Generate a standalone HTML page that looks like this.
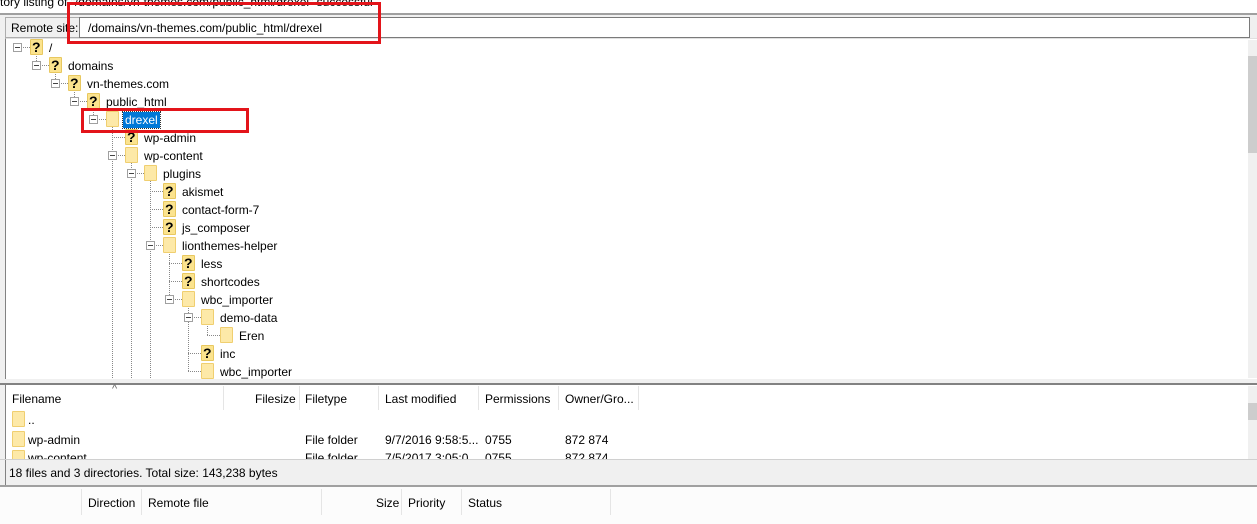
<!DOCTYPE html>
<html><head><meta charset="utf-8"><style>
*{margin:0;padding:0;box-sizing:border-box}
body{width:1257px;height:524px;overflow:hidden;background:#f0f0f0;font-family:"Liberation Sans",sans-serif;font-size:12px;color:#000;position:relative}
.a{position:absolute;white-space:nowrap}
.q{position:absolute;width:13px;height:16px;background:#fbe38e;border:1px solid #e8c860;border-radius:1px}
.q b{position:absolute;left:1px;top:-1px;font-size:14px;font-weight:bold;color:#000;font-family:"Liberation Sans",sans-serif}
.f{position:absolute;width:13px;height:16px;background:#fde9a8;border:1px solid #f0cf70;border-radius:1px}
.ex{position:absolute;width:9px;height:9px;border:1px solid #a0a0a0;background:#fff}
.ex:after{content:"";position:absolute;left:1px;top:3px;width:5px;height:1px;background:#444}
.vl{position:absolute;width:1px;border-left:1px dotted #888}
.hl{position:absolute;height:1px;border-top:1px dotted #888}
.red{position:absolute;border:3px solid #e3141a}
</style></head><body>
<div class="a" style="left:0;top:-5px;width:1257px;height:18px;background:#fff;font-size:12px">tory listing of "/domains/vn-themes.com/public_html/drexel" successful</div>
<div class="a" style="left:0;top:13px;width:1257px;height:2px;background:#a0a0a0"></div>
<div class="a" style="left:5px;top:17px;width:75px;height:21px;border:1px solid #adadad;padding:3px 0 0 5px">Remote site:</div>
<div class="a" style="left:79px;top:17px;width:1171px;height:21px;background:#fff;border:1px solid #7a7a7a;padding:3px 0 0 8px">/domains/vn-themes.com/public_html/drexel</div>
<div class="a" style="left:5px;top:38px;width:1252px;height:341px;background:#fff;border-left:1px solid #828282;border-top:1px solid #e0e0e0"></div>
<div class="a" style="left:1248px;top:40px;width:9px;height:338px;background:#f0f0f0"></div>
<div class="a" style="left:1248px;top:56px;width:9px;height:97px;background:#cdcdcd"></div>
<div class="a" style="left:0;top:383px;width:1257px;height:2px;background:#828282"></div>
<div class="a" style="left:5px;top:385px;width:1252px;height:75px;background:#fff;border-left:1px solid #828282"></div>
<div class="a" style="left:1248px;top:386px;width:9px;height:74px;background:#f0f0f0"></div>
<div class="a" style="left:1248px;top:403px;width:9px;height:17px;background:#cdcdcd"></div>
<div class="a" style="left:112px;top:383px;font-size:11px;color:#666">^</div>
<div class="a" style="left:12px;top:392px">Filename</div>
<div class="a" style="left:223px;top:386px;width:1px;height:24px;background:#e5e5e5"></div>
<div class="a" style="left:255px;top:392px">Filesize</div>
<div class="a" style="left:299px;top:386px;width:1px;height:24px;background:#e5e5e5"></div>
<div class="a" style="left:305px;top:392px">Filetype</div>
<div class="a" style="left:378px;top:386px;width:1px;height:24px;background:#e5e5e5"></div>
<div class="a" style="left:385px;top:392px">Last modified</div>
<div class="a" style="left:478px;top:386px;width:1px;height:24px;background:#e5e5e5"></div>
<div class="a" style="left:485px;top:392px">Permissions</div>
<div class="a" style="left:558px;top:386px;width:1px;height:24px;background:#e5e5e5"></div>
<div class="a" style="left:565px;top:392px">Owner/Gro...</div>
<div class="a" style="left:638px;top:386px;width:1px;height:24px;background:#e5e5e5"></div>
<div class="f" style="left:12px;top:411px"></div><div class="a" style="left:28px;top:413px">..</div>
<div class="f" style="left:12px;top:431px"></div><div class="a" style="left:28px;top:433px">wp-admin</div>
<div class="a" style="left:305px;top:433px">File folder</div><div class="a" style="left:385px;top:433px">9/7/2016 9:58:5...</div><div class="a" style="left:485px;top:433px">0755</div><div class="a" style="left:565px;top:433px">872 874</div>
<div class="f" style="left:12px;top:450px;height:10px"></div>
<div class="a" style="left:28px;top:451px;height:9px;overflow:hidden">wp-content</div>
<div class="a" style="left:305px;top:451px;height:9px;overflow:hidden">File folder</div><div class="a" style="left:385px;top:451px;height:9px;overflow:hidden">7/5/2017 3:05:0...</div><div class="a" style="left:485px;top:451px;height:9px;overflow:hidden">0755</div><div class="a" style="left:565px;top:451px;height:9px;overflow:hidden">872 874</div>
<div class="a" style="left:0;top:459px;width:1257px;height:1px;background:#d0d0d0"></div>
<div class="a" style="left:5px;top:460px;width:1252px;height:25px;border-left:1px solid #828282;padding:6px 0 0 3px">18 files and 3 directories. Total size: 143,238 bytes</div>
<div class="a" style="left:0;top:485px;width:1257px;height:2px;background:#a0a0a0"></div>
<div class="a" style="left:0;top:487px;width:1257px;height:37px;background:#fcfcfc"></div>
<div class="a" style="left:81px;top:489px;width:1px;height:26px;background:#e5e5e5"></div>
<div class="a" style="left:88px;top:496px">Direction</div>
<div class="a" style="left:141px;top:489px;width:1px;height:26px;background:#e5e5e5"></div>
<div class="a" style="left:148px;top:496px">Remote file</div>
<div class="a" style="left:321px;top:489px;width:1px;height:26px;background:#e5e5e5"></div>
<div class="a" style="left:376px;top:496px">Size</div>
<div class="a" style="left:401px;top:489px;width:1px;height:26px;background:#e5e5e5"></div>
<div class="a" style="left:408px;top:496px">Priority</div>
<div class="a" style="left:461px;top:489px;width:1px;height:26px;background:#e5e5e5"></div>
<div class="a" style="left:468px;top:496px">Status</div>
<div class="a" style="left:610px;top:489px;width:1px;height:26px;background:#e5e5e5"></div>
<div id="t"></div>
<div class="red" style="left:67px;top:2px;width:314px;height:42px"></div>
<div class="red" style="left:81px;top:108px;width:168px;height:25px"></div>
<script>
var rows=[["/",0,"q",1],["domains",1,"q",1],["vn-themes.com",2,"q",1],["public_html",3,"q",1],["drexel",4,"f",1],["wp-admin",5,"q",0],["wp-content",5,"f",1],["plugins",6,"f",1],["akismet",7,"q",0],["contact-form-7",7,"q",0],["js_composer",7,"q",0],["lionthemes-helper",7,"f",1],["less",8,"q",0],["shortcodes",8,"q",0],["wbc_importer",8,"f",1],["demo-data",9,"f",1],["Eren",10,"f",0],["inc",9,"q",0],["wbc_importer",9,"f",0]];
var h="";
function y(i){return 47+18*i;}
var v=[[1,0,1],[2,1,2],[3,2,3],[4,3,4],[5,4,19],[6,6,19],[7,7,19],[8,11,14],[9,14,18],[10,15,16]];
v.forEach(function(a){
 var t=y(a[1])+6,b=a[2]>=19?378:y(a[2]);
 h+='<div class="vl" style="left:'+(17+19*a[0])+'px;top:'+t+'px;height:'+(b-t)+'px"></div>';});
rows.forEach(function(r,i){
 var L=r[1],cy=y(i),lx=17+19*L,ix=30+19*L,tx=49+19*L;
 h+='<div class="hl" style="left:'+lx+'px;top:'+cy+'px;width:'+(ix-lx)+'px"></div>';
 if(r[3]) h+='<div class="ex" style="left:'+(lx-4)+'px;top:'+(cy-4)+'px"></div>';
 h+='<div class="'+r[2]+'" style="left:'+ix+'px;top:'+(cy-8)+'px">'+(r[2]=="q"?'<b>?</b>':'')+'</div>';
 if(r[0]=="drexel") h+='<div class="a" style="left:'+(tx-2)+'px;top:'+(cy-7)+'px;background:#0078d7;color:#fff;padding:1px 2px;outline:1px dotted #333">drexel</div>';
 else h+='<div class="a" style="left:'+tx+'px;top:'+(cy-6)+'px">'+r[0]+'</div>';
});
document.getElementById("t").innerHTML=h;
</script>
</body></html>
